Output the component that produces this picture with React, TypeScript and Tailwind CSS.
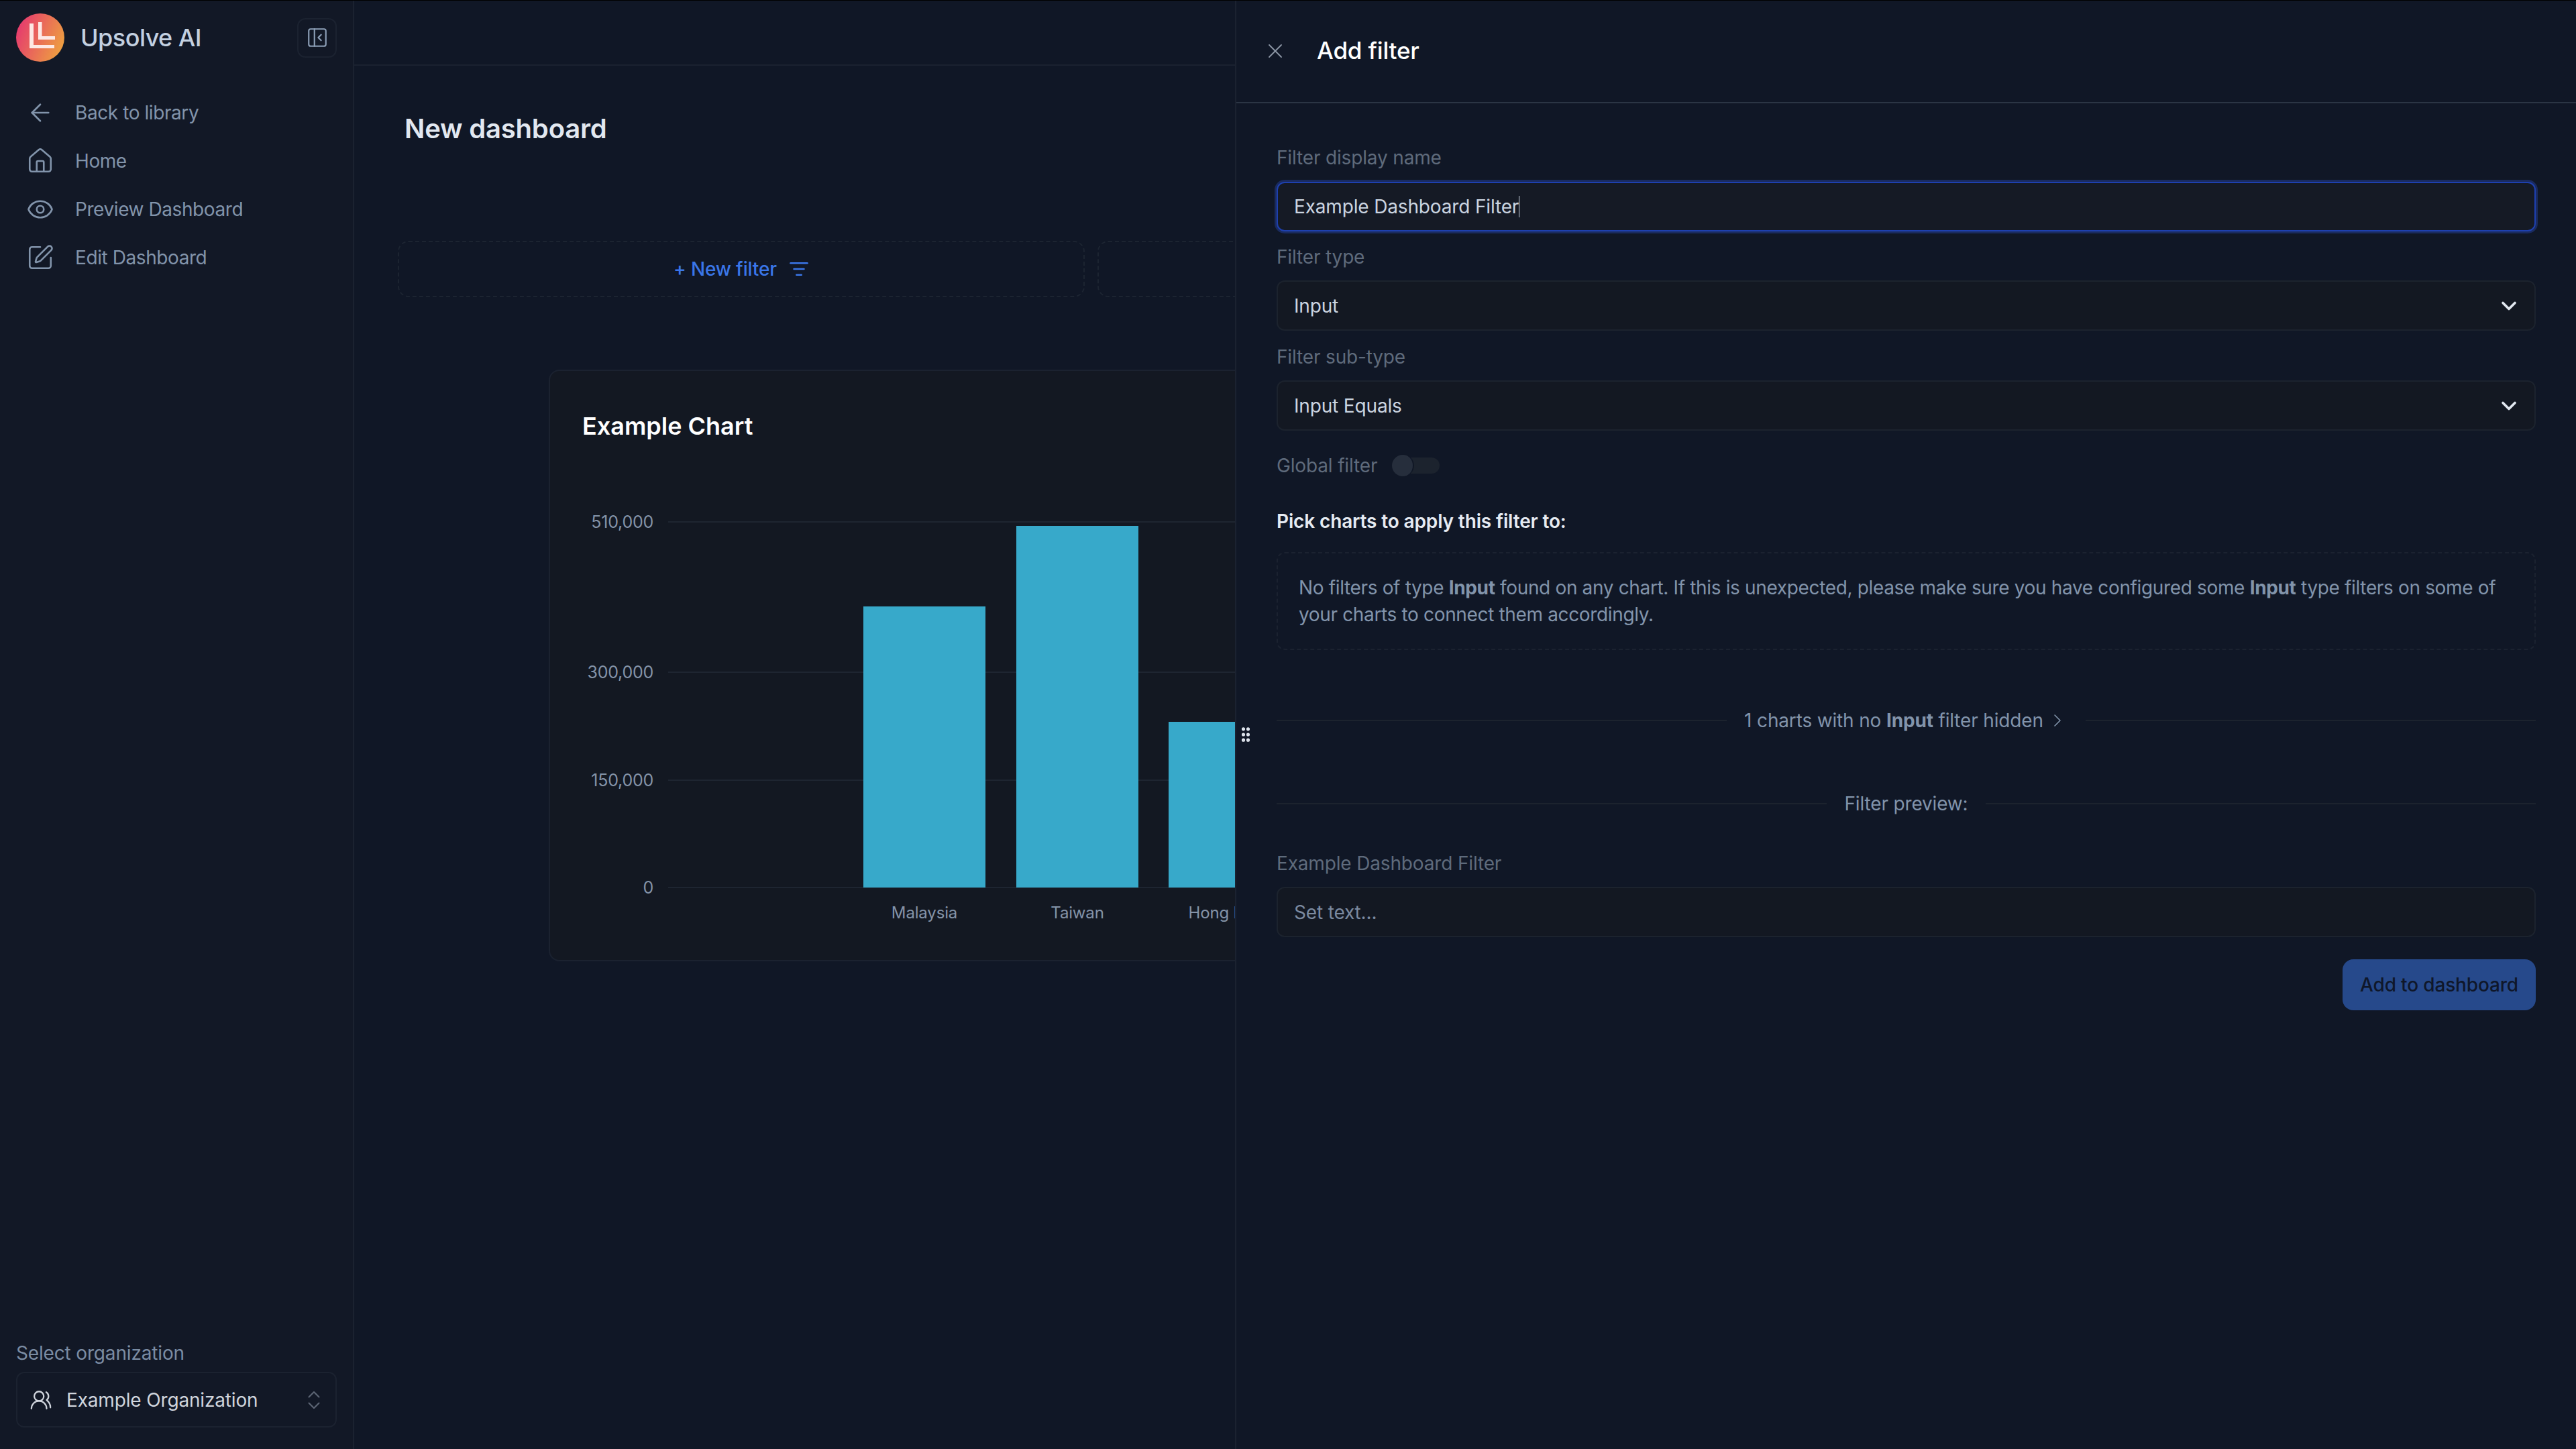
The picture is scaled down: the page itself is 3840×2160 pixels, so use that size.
import {
  ArrowLeft,
  ChevronDown,
  ChevronRight,
  ChevronsUpDown,
  Eye,
  GripVertical,
  House,
  ListFilter,
  PanelLeftClose,
  SquarePen,
  UsersRound,
  X,
} from "lucide-react";

const navItems = [
  { label: "Back to library", icon: ArrowLeft },
  { label: "Home", icon: House },
  { label: "Preview Dashboard", icon: Eye },
  { label: "Edit Dashboard", icon: SquarePen },
];

const Logo = () => (
  <svg width="72" height="72" viewBox="0 0 72 72" className="shrink-0">
    <defs>
      <linearGradient id="logoFill" x1="0" y1="0.3" x2="1" y2="0.7">
        <stop offset="0" stopColor="#e5396f" />
        <stop offset="1" stopColor="#eea23f" />
      </linearGradient>
    </defs>
    <circle cx="36" cy="36" r="36" fill="url(#logoFill)" />
    <path d="M20 15h6v32h31v5H20z" fill="#fde8e4" />
    <path d="M33 13h5.500v21H58v5H33z" fill="#fde8e4" />
  </svg>
);

const Sidebar = () => (
  <aside className="w-[528px] h-full shrink-0 border-r-2 border-[#1b2230] bg-[#121826] flex flex-col px-6 pb-[32px]">
    <div className="flex items-center justify-between pt-[19px]">
      <div className="flex items-center gap-[24px]">
        <Logo />
        <span className="text-[36px] font-medium tracking-[-0.015em] text-[#c3d0e0]">Upsolve AI</span>
      </div>
      <div className="w-[59px] h-[59px] rounded-xl border-2 border-[#1b2230] flex items-center justify-center">
        <PanelLeftClose size={34} strokeWidth={1.5} className="text-[#8da0b8]" />
      </div>
    </div>
    <nav className="mt-[40px] flex flex-col">
      {navItems.map(({ label, icon: Icon }) => (
        <div key={label} className="h-[72px] flex items-center pl-[15px] gap-[31px] text-[#8294ab]">
          <Icon size={42} strokeWidth={1.5} className="shrink-0" />
          <span className="text-[28px] tracking-[-0.015em]">{label}</span>
        </div>
      ))}
    </nav>
    <div className="mt-auto">
      <p className="text-[28px] leading-[40px] text-[#7b8ca3] mb-[8px]">Select organization</p>
      <div className="h-[83px] rounded-xl border-2 border-[#1b2230] flex items-center pl-[18px] pr-[14px] text-[#d0d5dd]">
        <UsersRound size={34} strokeWidth={1.6} className="shrink-0" />
        <span className="ml-[21px] text-[28px]">Example Organization</span>
        <ChevronsUpDown size={36} strokeWidth={1.4} className="ml-auto text-[#5d6676]" />
      </div>
    </div>
  </aside>
);

const ChartPlot = () => (
  <svg width="1800" height="652" viewBox="0 0 1800 652" className="block ml-[1px] font-['Inter',sans-serif]">
    {[
      { y: 19, label: "510,000" },
      { y: 243, label: "300,000" },
      { y: 404, label: "150,000" },
      { y: 564, label: "0" },
    ].map((tick) => (
      <g key={tick.label}>
        <line x1="175" x2="1800" y1={tick.y} y2={tick.y} stroke="#1e2531" strokeWidth="2" />
        <text x="153" y={tick.y + 9} textAnchor="end" fontSize="25" letterSpacing="-0.25" fill="#8493a8">
          {tick.label}
        </text>
      </g>
    ))}
    <rect x="466" y="145" width="182" height="419" fill="#37a9ca" />
    <rect x="694" y="25" width="182" height="539" fill="#37a9ca" />
    <rect x="921" y="317" width="182" height="247" fill="#37a9ca" />
    <text x="557" y="610" textAnchor="middle" fontSize="24" fill="#8493a8">Malaysia</text>
    <text x="785" y="610" textAnchor="middle" fontSize="24" fill="#8493a8">Taiwan</text>
    <text x="1013" y="610" textAnchor="middle" fontSize="24" fill="#8493a8">Hong Kong</text>
  </svg>
);

const Dashboard = () => (
  <main className="w-[1313px] h-full shrink-0 overflow-hidden bg-[#101726]">
    <div className="h-[97px] border-b-2 border-[#1b2230]" />
    <h1 className="pl-[75px] mt-[68px] text-[40px] leading-[52px] font-semibold tracking-[-0.005em] text-[#e2e8f0]">New dashboard</h1>
    <div className="flex gap-[19px] pl-[65px] mt-[141px] w-[2400px]">
      <div className="w-[1024px] h-[84px] rounded-2xl border-2 border-dashed border-[#1c2431] flex items-center justify-center gap-[18px] text-[#3a76e8]">
        <span className="text-[28px] font-medium">+ New filter</span>
        <ListFilter size={30} strokeWidth={2} />
      </div>
      <div className="w-[1024px] h-[84px] rounded-2xl border-2 border-dashed border-[#1c2431]" />
    </div>
    <div className="ml-[290px] mt-[108px] w-[2000px] h-[882px] rounded-2xl border-2 border-[#1b2230] bg-[#131822]">
      <h2 className="ml-[48px] mt-[60px] text-[36px] leading-[44px] font-semibold tracking-normal text-white">Example Chart</h2>
      <div className="mt-[102px]">
        <ChartPlot />
      </div>
    </div>
  </main>
);

const Label = ({ children }: { children: React.ReactNode }) => (
  <label className="block text-[28px] leading-[40px] text-[#5f6b7c]">{children}</label>
);

const SelectField = ({ value }: { value: string }) => (
  <div className="h-[75px] rounded-xl border-2 border-[#1c232e] bg-[#131822] flex items-center pl-[24px] pr-[20px] text-[#cbd5e1]">
    <span className="text-[28px]">{value}</span>
    <ChevronDown size={36} strokeWidth={2.4} className="ml-auto text-[#e2e8f0]" />
  </div>
);

const Divider = ({ children }: { children: React.ReactNode }) => (
  <div className="flex items-center gap-[26px]">
    <div className="flex-1 h-[2px] bg-[#1c232e]" />
    <div className="flex items-center text-[28px] leading-[40px] text-[#8294ab]">{children}</div>
    <div className="flex-1 h-[2px] bg-[#1c232e]" />
  </div>
);

const FilterPanel = () => (
  <section className="relative flex-1 h-full border-l-2 border-[#1b2230] bg-[#101726]">
    <GripVertical size={28} strokeWidth={2.4} className="absolute left-0 top-[1080px] text-[#e2e8f0]" />
    <header className="h-[153px] border-b-2 border-[#2b3544] flex items-center pl-[40px] pb-[2px]">
      <X size={36} strokeWidth={1.2} className="text-[#8f99a8]" />
      <h2 className="ml-[44px] text-[35px] font-medium text-white">Add filter</h2>
    </header>
    <div className="pl-[60px] pr-[60px] pt-[61px]">
      <Label>Filter display name</Label>
      <div className="mt-[16px] h-[74px] rounded-xl border-2 border-[#1e40af] ring-[3px] ring-[#1a2b5f] bg-[#151a25] flex items-center pl-[24px]">
        <span className="text-[28px] text-[#cbd5e1]">Example Dashboard Filter</span>
        <span className="w-px h-[32px] bg-[#cbd5e1]" />
      </div>
      <div className="mt-[18px]">
        <Label>Filter type</Label>
      </div>
      <div className="mt-[15px]">
        <SelectField value="Input" />
      </div>
      <div className="mt-[19px]">
        <Label>Filter sub-type</Label>
      </div>
      <div className="mt-[15px]">
        <SelectField value="Input Equals" />
      </div>
      <div className="mt-[32px] flex items-center h-[40px]">
        <Label>Global filter</Label>
        <div className="ml-[22px] relative w-[71px] h-[32px] flex items-center">
          <div className="absolute right-0 w-[60px] h-[24px] rounded-full bg-[#1c232e]" />
          <div className="absolute left-0 w-[33px] h-[32px] rounded-full bg-[#262e3c] border-r-2 border-[#101726]" />
        </div>
      </div>
      <p className="mt-[43px] text-[28px] leading-[40px] font-semibold tracking-[-0.005em] text-[#e6ebf2]">Pick charts to apply this filter to:</p>
      <div className="mt-[26px] h-[146px] rounded-xl border-2 border-dashed border-[#1b2230] flex items-center pl-[31px] pr-[20px] text-[28px] leading-[40px] tracking-[-0.0125em] text-[#8294ab]">
        <p>
          No filters of type <b className="font-bold">Input</b> found on any chart. If this is unexpected, please make sure you have configured some <b className="font-bold">Input</b> type filters on some of your charts to connect them accordingly.
        </p>
      </div>
      <div className="mt-[85px]">
        <Divider>
          <span>
            1 charts with no <b className="font-bold">Input</b> filter hidden
          </span>
          <ChevronRight size={32} strokeWidth={1.2} className="ml-[5px]" />
        </Divider>
      </div>
      <div className="mt-[84px]">
        <Divider>Filter preview:</Divider>
      </div>
      <div className="mt-[49px]">
        <Label>Example Dashboard Filter</Label>
      </div>
      <div className="mt-[15px] h-[75px] rounded-xl border-2 border-[#1c232e] bg-[#131822] flex items-center pl-[24px] text-[28px] text-[#7b8aa0]">
        Set text...
      </div>
      <div className="mt-[33px] flex justify-end">
        <button className="h-[76px] w-[288px] rounded-2xl bg-[#26498b] text-[28px] font-medium text-[#0f172a]">
          Add to dashboard
        </button>
      </div>
    </div>
  </section>
);

export default function App() {
  return (
    <div className="w-[3840px] h-[2160px] overflow-hidden border-t border-black flex bg-[#101726] tracking-[-0.01em] font-['Inter',sans-serif]">
      <Sidebar />
      <Dashboard />
      <FilterPanel />
    </div>
  );
}
